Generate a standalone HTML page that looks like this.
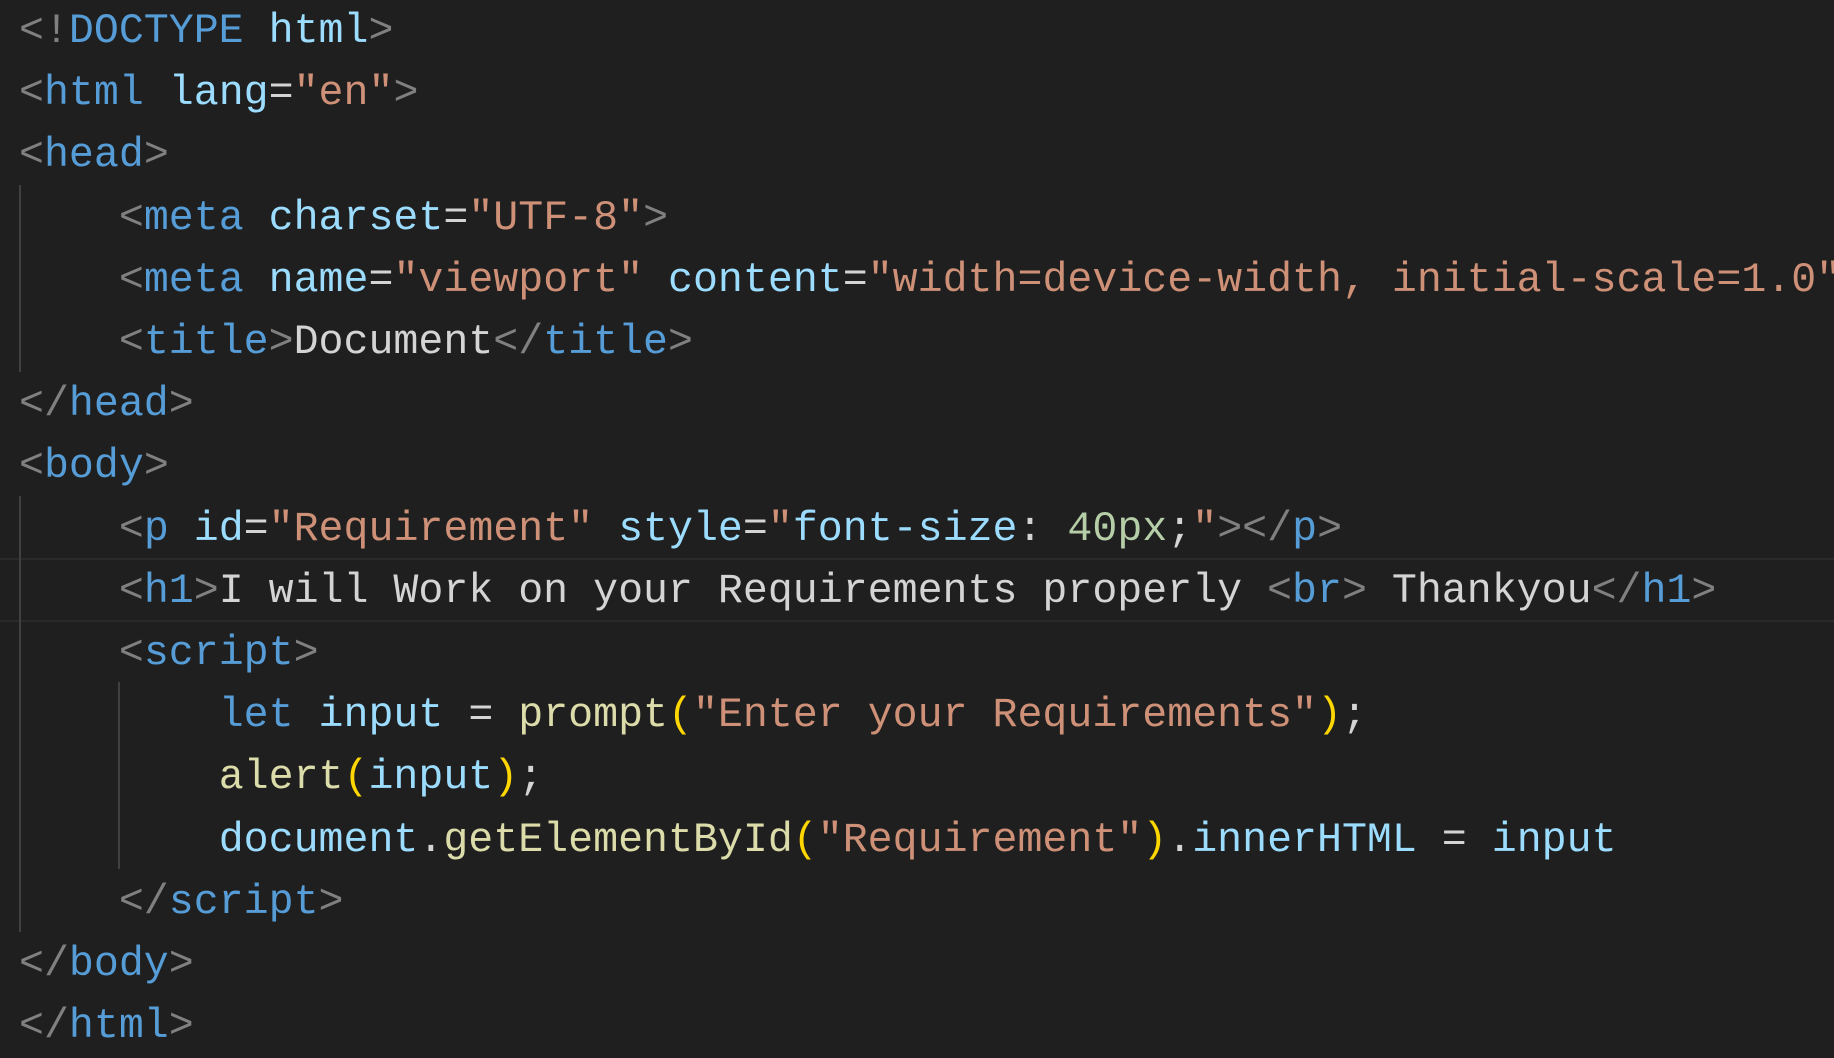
<!DOCTYPE html>
<html><head><meta charset="utf-8"><style>
html,body{margin:0;padding:0;background:#1f1f1f;width:1834px;height:1030px;overflow:hidden}
.code{position:absolute;left:19px;top:1px;font-family:"Liberation Mono",monospace;font-size:41.6px;line-height:62.2px;color:#d4d4d4;white-space:pre}
.hl{position:absolute;left:0;top:558px;width:1834px;height:60px;border-top:2px solid #2a2a2a;border-bottom:2px solid #2a2a2a}
.g{position:absolute;width:2px;background:#404040}
.p{color:#808080}.t{color:#569cd6}.a{color:#9cdcfe}.s{color:#ce9178}.f{color:#dcdcaa}.b{color:#ffd700}.n{color:#b5cea8}
</style></head><body>
<div class="hl"></div>
<div class="g" style="left:19px;top:185px;height:187px"></div>
<div class="g" style="left:19px;top:496px;height:436px"></div>
<div class="g" style="left:118px;top:682px;height:187px"></div>
<div class="code"><span class="p">&lt;!</span><span class="t">DOCTYPE</span> <span class="a">html</span><span class="p">&gt;</span>
<span class="p">&lt;</span><span class="t">html</span> <span class="a">lang</span>=<span class="s">"en"</span><span class="p">&gt;</span>
<span class="p">&lt;</span><span class="t">head</span><span class="p">&gt;</span>
    <span class="p">&lt;</span><span class="t">meta</span> <span class="a">charset</span>=<span class="s">"UTF-8"</span><span class="p">&gt;</span>
    <span class="p">&lt;</span><span class="t">meta</span> <span class="a">name</span>=<span class="s">"viewport"</span> <span class="a">content</span>=<span class="s">"width=device-width, initial-scale=1.0"</span><span class="p">&gt;</span>
    <span class="p">&lt;</span><span class="t">title</span><span class="p">&gt;</span>Document<span class="p">&lt;/</span><span class="t">title</span><span class="p">&gt;</span>
<span class="p">&lt;/</span><span class="t">head</span><span class="p">&gt;</span>
<span class="p">&lt;</span><span class="t">body</span><span class="p">&gt;</span>
    <span class="p">&lt;</span><span class="t">p</span> <span class="a">id</span>=<span class="s">"Requirement"</span> <span class="a">style</span>=<span class="s">"</span><span class="a">font-size</span>: <span class="n">40px</span>;<span class="s">"</span><span class="p">&gt;&lt;/</span><span class="t">p</span><span class="p">&gt;</span>
    <span class="p">&lt;</span><span class="t">h1</span><span class="p">&gt;</span>I will Work on your Requirements properly <span class="p">&lt;</span><span class="t">br</span><span class="p">&gt;</span> Thankyou<span class="p">&lt;/</span><span class="t">h1</span><span class="p">&gt;</span>
    <span class="p">&lt;</span><span class="t">script</span><span class="p">&gt;</span>
        <span class="t">let</span> <span class="a">input</span> = <span class="f">prompt</span><span class="b">(</span><span class="s">"Enter your Requirements"</span><span class="b">)</span>;
        <span class="f">alert</span><span class="b">(</span><span class="a">input</span><span class="b">)</span>;
        <span class="a">document</span>.<span class="f">getElementById</span><span class="b">(</span><span class="s">"Requirement"</span><span class="b">)</span>.<span class="a">innerHTML</span> = <span class="a">input</span>
    <span class="p">&lt;/</span><span class="t">script</span><span class="p">&gt;</span>
<span class="p">&lt;/</span><span class="t">body</span><span class="p">&gt;</span>
<span class="p">&lt;/</span><span class="t">html</span><span class="p">&gt;</span></div>
</body></html>
